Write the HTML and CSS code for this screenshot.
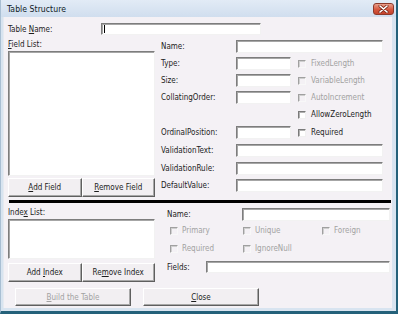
FILE: index.html
```html
<!DOCTYPE html>
<html>
<head>
<meta charset="utf-8">
<link rel="stylesheet" href="styles.css">
</head>
<body>
<div class="window">
  <div class="titlebar">
    <span class="title">Table Structure</span>
    <span class="close-btn"><svg width="11" height="8" viewBox="0 0 11 8"><path d="M2 1 L9 7 M9 1 L2 7" stroke="#7a2a1c" stroke-width="3" stroke-linecap="round"/><path d="M2 1 L9 7 M9 1 L2 7" stroke="#ffffff" stroke-width="1.6" stroke-linecap="round"/></svg></span>
  </div>
  <div class="body">
    <div class="name-row">
      <span class="lbl name-lbl">Table <u>N</u>ame:</span>
      <div class="textbox tb-tablename"><span class="caret"></span></div>
    </div>

    <div class="fields">
      <div class="list-col">
        <div class="lbl list-lbl"><u>F</u>ield List:</div>
        <div class="listbox field-list"></div>
        <div class="btn-pair">
          <div class="btn"><span><u>A</u>dd Field</span></div>
          <div class="btn"><span><u>R</u>emove Field</span></div>
        </div>
      </div>
      <div class="props">
        <span class="lbl cell">Name:</span>
        <div class="textbox wide"></div>

        <span class="lbl cell">Type:</span>
        <div class="textbox short"></div>
        <div class="check disabled"><span class="box"></span>FixedLength</div>

        <span class="lbl cell">Size:</span>
        <div class="textbox short"></div>
        <div class="check disabled"><span class="box"></span>VariableLength</div>

        <span class="lbl cell">CollatingOrder:</span>
        <div class="textbox short"></div>
        <div class="check disabled"><span class="box"></span>AutoIncrement</div>

        <span class="lbl cell"></span>
        <div class="check"><span class="box"></span>AllowZeroLength</div>

        <span class="lbl cell">OrdinalPosition:</span>
        <div class="textbox short"></div>
        <div class="check"><span class="box"></span>Required</div>

        <span class="lbl cell">ValidationText:</span>
        <div class="textbox wide"></div>

        <span class="lbl cell">ValidationRule:</span>
        <div class="textbox wide"></div>

        <span class="lbl cell">DefaultValue:</span>
        <div class="textbox wide"></div>
      </div>
    </div>

    <div class="divider"></div>

    <div class="indexes">
      <div class="list-col">
        <div class="lbl list-lbl">Inde<u>x</u> List:</div>
        <div class="listbox index-list"></div>
        <div class="btn-pair index-btns">
          <div class="btn"><span>Add <u>I</u>ndex</span></div>
          <div class="btn"><span>Re<u>m</u>ove Index</span></div>
        </div>
      </div>
      <div class="index-props">
        <div class="iname-row">
          <span class="lbl iname-lbl">Name:</span>
          <div class="textbox iname"></div>
        </div>
        <div class="checks">
          <div class="check disabled"><span class="box"></span>Primary</div>
          <div class="check disabled"><span class="box"></span>Unique</div>
          <div class="check disabled"><span class="box"></span>Foreign</div>
          <div class="check disabled"><span class="box"></span>Required</div>
          <div class="check disabled"><span class="box"></span>IgnoreNull</div>
        </div>
        <div class="ifields-row">
          <span class="lbl ifields-lbl">Fields:</span>
          <div class="textbox ifields"></div>
        </div>
      </div>
    </div>

    <div class="footer">
      <div class="btn big disabled-text"><span><u>B</u>uild the Table</span></div>
      <div class="btn big"><span><u>C</u>lose</span></div>
    </div>
  </div>
</div>
</body>
</html>
```
FILE: styles.css
```css
* { box-sizing: border-box; }
html, body { margin: 0; padding: 0; }
body {
  font-family: "DejaVu Sans Condensed", "DejaVu Sans", sans-serif;
  font-stretch: condensed;
  font-size: 8px;
  color: #1c1c1c;
  background: #ffffff;
}
u { text-decoration: underline; text-underline-offset: 1px; }

.window {
  width: 398px;
  height: 314px;
  border-left: 1px solid #a9bfd3;
  border-right: 2px solid #24617a;
  border-bottom: 3px solid #24617a;
  background: #d8e4f0;
  display: flex;
  flex-direction: column;
}

.titlebar {
  height: 17px;
  flex: none;
  display: flex;
  align-items: center;
  justify-content: space-between;
  padding-left: 6px;
  padding-right: 2px;
  background: linear-gradient(#e2ebf6, #d0deee);
}
.title {
  font-size: 8.6px;
  color: #101a26;
  letter-spacing: 0.05px;
}
.close-btn {
  width: 21px;
  height: 12px;
  margin-top: 1px;
  border: 1px solid #8c3a2b;
  border-radius: 3px;
  background: linear-gradient(#eaa08c, #d6573e 55%, #c4432b);
  display: flex;
  align-items: center;
  justify-content: center;
}

.body {
  flex: 1;
  margin: 0 4px 3px 2px;
  background: #f4f1f5;
  border-left: 1px solid #e6eaf0;
  padding: 6px 0 0 4px;
}

.lbl { white-space: nowrap; }

.textbox {
  background: #ffffff;
  border-style: solid;
  border-width: 1px;
  border-color: #7d7d7d #f2f2f2 #f2f2f2 #7d7d7d;
  box-shadow: inset 1px 1px 0 #a6a6a6;
}

.name-row {
  display: flex;
  align-items: center;
  height: 12px;
}
.name-lbl { width: 93px; }
.tb-tablename {
  width: 160px;
  height: 12px;
  display: flex;
  align-items: center;
  padding-left: 2px;
}
.caret {
  width: 1px;
  height: 8px;
  background: #000000;
}

.fields {
  display: flex;
  gap: 6px;
  margin-top: 5px;
}
.list-col {
  width: 147px;
  display: flex;
  flex-direction: column;
}
.list-lbl {
  height: 11px;
  line-height: 9px;
}
.listbox {
  background: #ffffff;
  border-style: solid;
  border-width: 1px;
  border-color: #7d7d7d #f2f2f2 #f2f2f2 #7d7d7d;
  box-shadow: inset 1px 1px 0 #a6a6a6;
}
.field-list { height: 125px; }
.index-list { height: 40px; }

.btn-pair {
  display: flex;
  margin-top: 2px;
}
.btn-pair .btn { flex: 1; height: 19px; }
.index-btns { margin-top: 4px; }

.btn {
  display: flex;
  align-items: center;
  justify-content: center;
  background: #f2eff2;
  border-style: solid;
  border-width: 1px;
  border-color: #ffffff #5f5f5f #5f5f5f #ffffff;
  box-shadow: inset -1px -1px 0 #a8a8a8;
  color: #1c1c1c;
  white-space: nowrap;
}

.props {
  display: grid;
  grid-template-columns: 75px 56px 1fr;
  grid-template-rows: 17px 17px 17px 17px 18px 18px 18px 17px 13px;
  align-items: start;
}
.props .cell {
  height: 13px;
  display: flex;
  align-items: center;
  grid-column: 1;
}
.props .textbox { height: 13px; }
.props .short { width: 55px; grid-column: 2; }
.props .wide { width: 147px; grid-column: 2 / 4; }

.check {
  height: 13px;
  display: flex;
  align-items: center;
  white-space: nowrap;
  color: #1c1c1c;
}
.props .check {
  grid-column: 3;
  padding-left: 6px;
}
.box {
  width: 8px;
  height: 8px;
  flex: none;
  margin-right: 5px;
  background: #ffffff;
  border-style: solid;
  border-width: 1px;
  border-color: #7a7a7a #f0f0f0 #f0f0f0 #7a7a7a;
  box-shadow: inset 1px 1px 0 #b0b0b0;
}
.check.disabled { color: #a2a2a2; }
.check.disabled .box {
  background: #f4f1f5;
  border-color: #a0a0a0 #f8f8f8 #f8f8f8 #a0a0a0;
  box-shadow: inset 1px 1px 0 #cfcfcf;
}

.divider {
  height: 3px;
  margin: 3px 0 0 1px;
  width: 382px;
  background: #000000;
}

.indexes {
  display: flex;
  gap: 12px;
  margin-top: 5px;
}
.index-props {
  width: 223px;
  display: flex;
  flex-direction: column;
}
.iname-row {
  display: flex;
  align-items: center;
  height: 13px;
}
.iname-lbl { width: 75px; }
.iname { width: 148px; height: 13px; }

.checks {
  display: grid;
  grid-template-columns: 73px 79px auto;
  grid-auto-rows: 13px;
  row-gap: 5px;
  margin-top: 3px;
  padding-left: 3px;
}
.checks .box { margin-right: 4px; }

.ifields-row {
  display: flex;
  align-items: center;
  height: 12px;
  margin-top: 6px;
}
.ifields-lbl { width: 39px; }
.ifields { width: 184px; height: 12px; }

.footer {
  display: flex;
  gap: 12px;
  margin-top: 6px;
  padding-left: 7px;
}
.btn.big { width: 116px; height: 18px; }
.disabled-text { color: #a2a2a2; }
```
